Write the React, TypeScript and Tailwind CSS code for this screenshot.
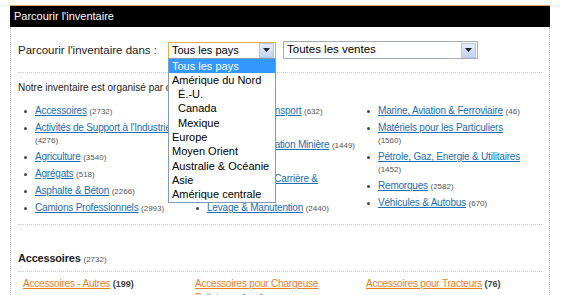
import type { ReactNode } from 'react';

const FONT = { fontFamily: '"Liberation Sans", Arial, sans-serif' };

type Item = { label: ReactNode; count: string; wrap?: boolean };

const col1: Item[] = [
  { label: 'Accessoires', count: '(2732)' },
  { label: "Activités de Support à l'Industrie", count: '(4276)', wrap: true },
  { label: 'Agriculture', count: '(3540)' },
  { label: 'Agrégats', count: '(518)' },
  { label: 'Asphalte & Béton', count: '(2266)' },
  { label: 'Camions Professionnels', count: '(2993)' },
];

const col2: Item[] = [
  { label: 'Camions de Transport', count: '(632)' },
  { label: 'Élévateurs', count: '(626)' },
  { label: "Engins d'Exploitation Minière", count: '(1449)' },
  { label: 'Forêt', count: '(812)' },
  { label: <>Équipement de Carrière &amp;<br />Grues</>, count: '(1259)' },
  { label: 'Levage & Manutention', count: '(2440)' },
];

const col3: Item[] = [
  { label: 'Marine, Aviation & Ferroviaire', count: '(46)' },
  { label: 'Matériels pour les Particuliers', count: '(1560)', wrap: true },
  { label: 'Pétrole, Gaz, Energie & Utilitaires', count: '(1452)', wrap: true },
  { label: 'Remorques', count: '(2582)' },
  { label: 'Véhicules & Autobus', count: '(670)' },
];

const countries = [
  { name: 'Tous les pays', selected: true },
  { name: 'Amérique du Nord' },
  { name: 'É.-U.', indent: true },
  { name: 'Canada', indent: true },
  { name: 'Mexique', indent: true },
  { name: 'Europe' },
  { name: 'Moyen Orient' },
  { name: 'Australie & Océanie' },
  { name: 'Asie' },
  { name: 'Amérique centrale' },
];

function Arrow() {
  return (
    <span className="flex h-[15px] w-[15px] items-center justify-center border border-[#b4c6e6] bg-gradient-to-b from-[#e6eefc] to-[#c2d4f2]">
      <svg width="7" height="4" viewBox="0 0 7 4">
        <path d="M0 0h7L3.5 4z" fill="#222" />
      </svg>
    </span>
  );
}

function CategoryList({ items }: { items: Item[] }) {
  return (
    <ul className="flex flex-col gap-[5px]">
      {items.map((it, i) => (
        <li key={i} className="flex text-[10px] leading-[12px] tracking-[-0.2px] whitespace-nowrap">
          <span className="mt-[5px] mr-[8px] h-[3px] w-[3px] shrink-0 rounded-full bg-[#444]" />
          <div>
            <a className="text-[#1b6eb4] underline">{it.label}</a>
            {it.wrap ? <br /> : ' '}
            <span className="text-[8px] leading-none tracking-normal text-[#555]">{it.count}</span>
          </div>
        </li>
      ))}
    </ul>
  );
}

export default function App() {
  return (
    <div className="h-[295px] w-[575px] overflow-hidden bg-white pt-[5px] pl-[10px] text-[#333]" style={FONT}>
      <div className="w-[540px]">
        <div className="h-[22px] border-t border-[#f0a35c] bg-black pl-[4px] text-[11px] leading-[21px] text-white">
          Parcourir l'inventaire
        </div>
        <div className="h-[300px] border-r border-l border-dotted border-[#bbb] px-[7px]">
          <div className="relative flex items-center pt-[14px]">
            <span className="w-[150px] text-[11.5px] leading-[17px] whitespace-nowrap text-[#222]">
              Parcourir l'inventaire dans :
            </span>
            <div className="relative">
              <div className="flex h-[17px] w-[108px] items-center justify-between border border-[#eaa94f] bg-white pr-[1px] pl-[3px] text-[11px] text-black">
                <span>Tous les pays</span>
                <Arrow />
              </div>
              <ul className="absolute top-[16px] left-0 z-10 w-[108px] border border-[#7f9db9] bg-white pb-[1px] text-[11px] leading-[14.3px] whitespace-nowrap text-black">
                {countries.map((c) => (
                  <li
                    key={c.name}
                    className={
                      c.selected
                        ? 'bg-[#3399ff] pl-[3px] text-white'
                        : c.indent
                          ? 'pl-[9px]'
                          : 'pl-[3px]'
                    }
                  >
                    {c.name}
                  </li>
                ))}
              </ul>
            </div>
            <div className="ml-[7px] flex h-[18px] w-[195px] items-center justify-between border border-[#a5acb5] bg-white pr-[1px] pl-[3px] text-[11.5px] text-black">
              <span>Toutes les ventes</span>
              <Arrow />
            </div>
          </div>

          <div className="mt-[13px] border-t border-dotted border-[#ccc]" />

          <p className="mt-[9px] text-[10px] leading-[12px] text-[#222]">Notre inventaire est organisé par catégorie :</p>

          <div className="mt-[11px] grid grid-cols-[172px_171px_1fr] pl-[6px]">
            <CategoryList items={col1} />
            <CategoryList items={col2} />
            <CategoryList items={col3} />
          </div>

          <div className="mt-[10px] border-t border-dotted border-[#ccc]" />

          <h2 className="mt-[26px] text-[11px] leading-[14px] font-bold tracking-[-0.2px] text-[#222]">
            Accessoires <span className="text-[8px] leading-none font-normal tracking-normal text-[#555]">(2732)</span>
          </h2>

          <div className="mt-[6px] border-t border-dotted border-[#ccc]" />

          <div className="mt-[5px] grid grid-cols-[172px_171px_1fr] pl-[5px] text-[10px] leading-[14px] tracking-[-0.2px]">
            <div>
              <a className="text-[#ee7d1e] underline">Accessoires - Autres</a>{' '}
              <span className="text-[9px] leading-none font-bold tracking-normal text-[#444]">(199)</span>
            </div>
            <div>
              <a className="text-[#ee7d1e] underline">Accessoires pour Chargeuse</a>
              <br />
              <a className="text-[#ee7d1e] underline">Pelleteuse</a>{' '}
              <span className="text-[9px] leading-none font-bold tracking-normal text-[#444]">(148)</span>
            </div>
            <div>
              <a className="text-[#ee7d1e] underline">Accessoires pour Tracteurs</a>{' '}
              <span className="text-[9px] leading-none font-bold tracking-normal text-[#444]">(76)</span>
            </div>
          </div>
        </div>
      </div>
    </div>
  );
}
